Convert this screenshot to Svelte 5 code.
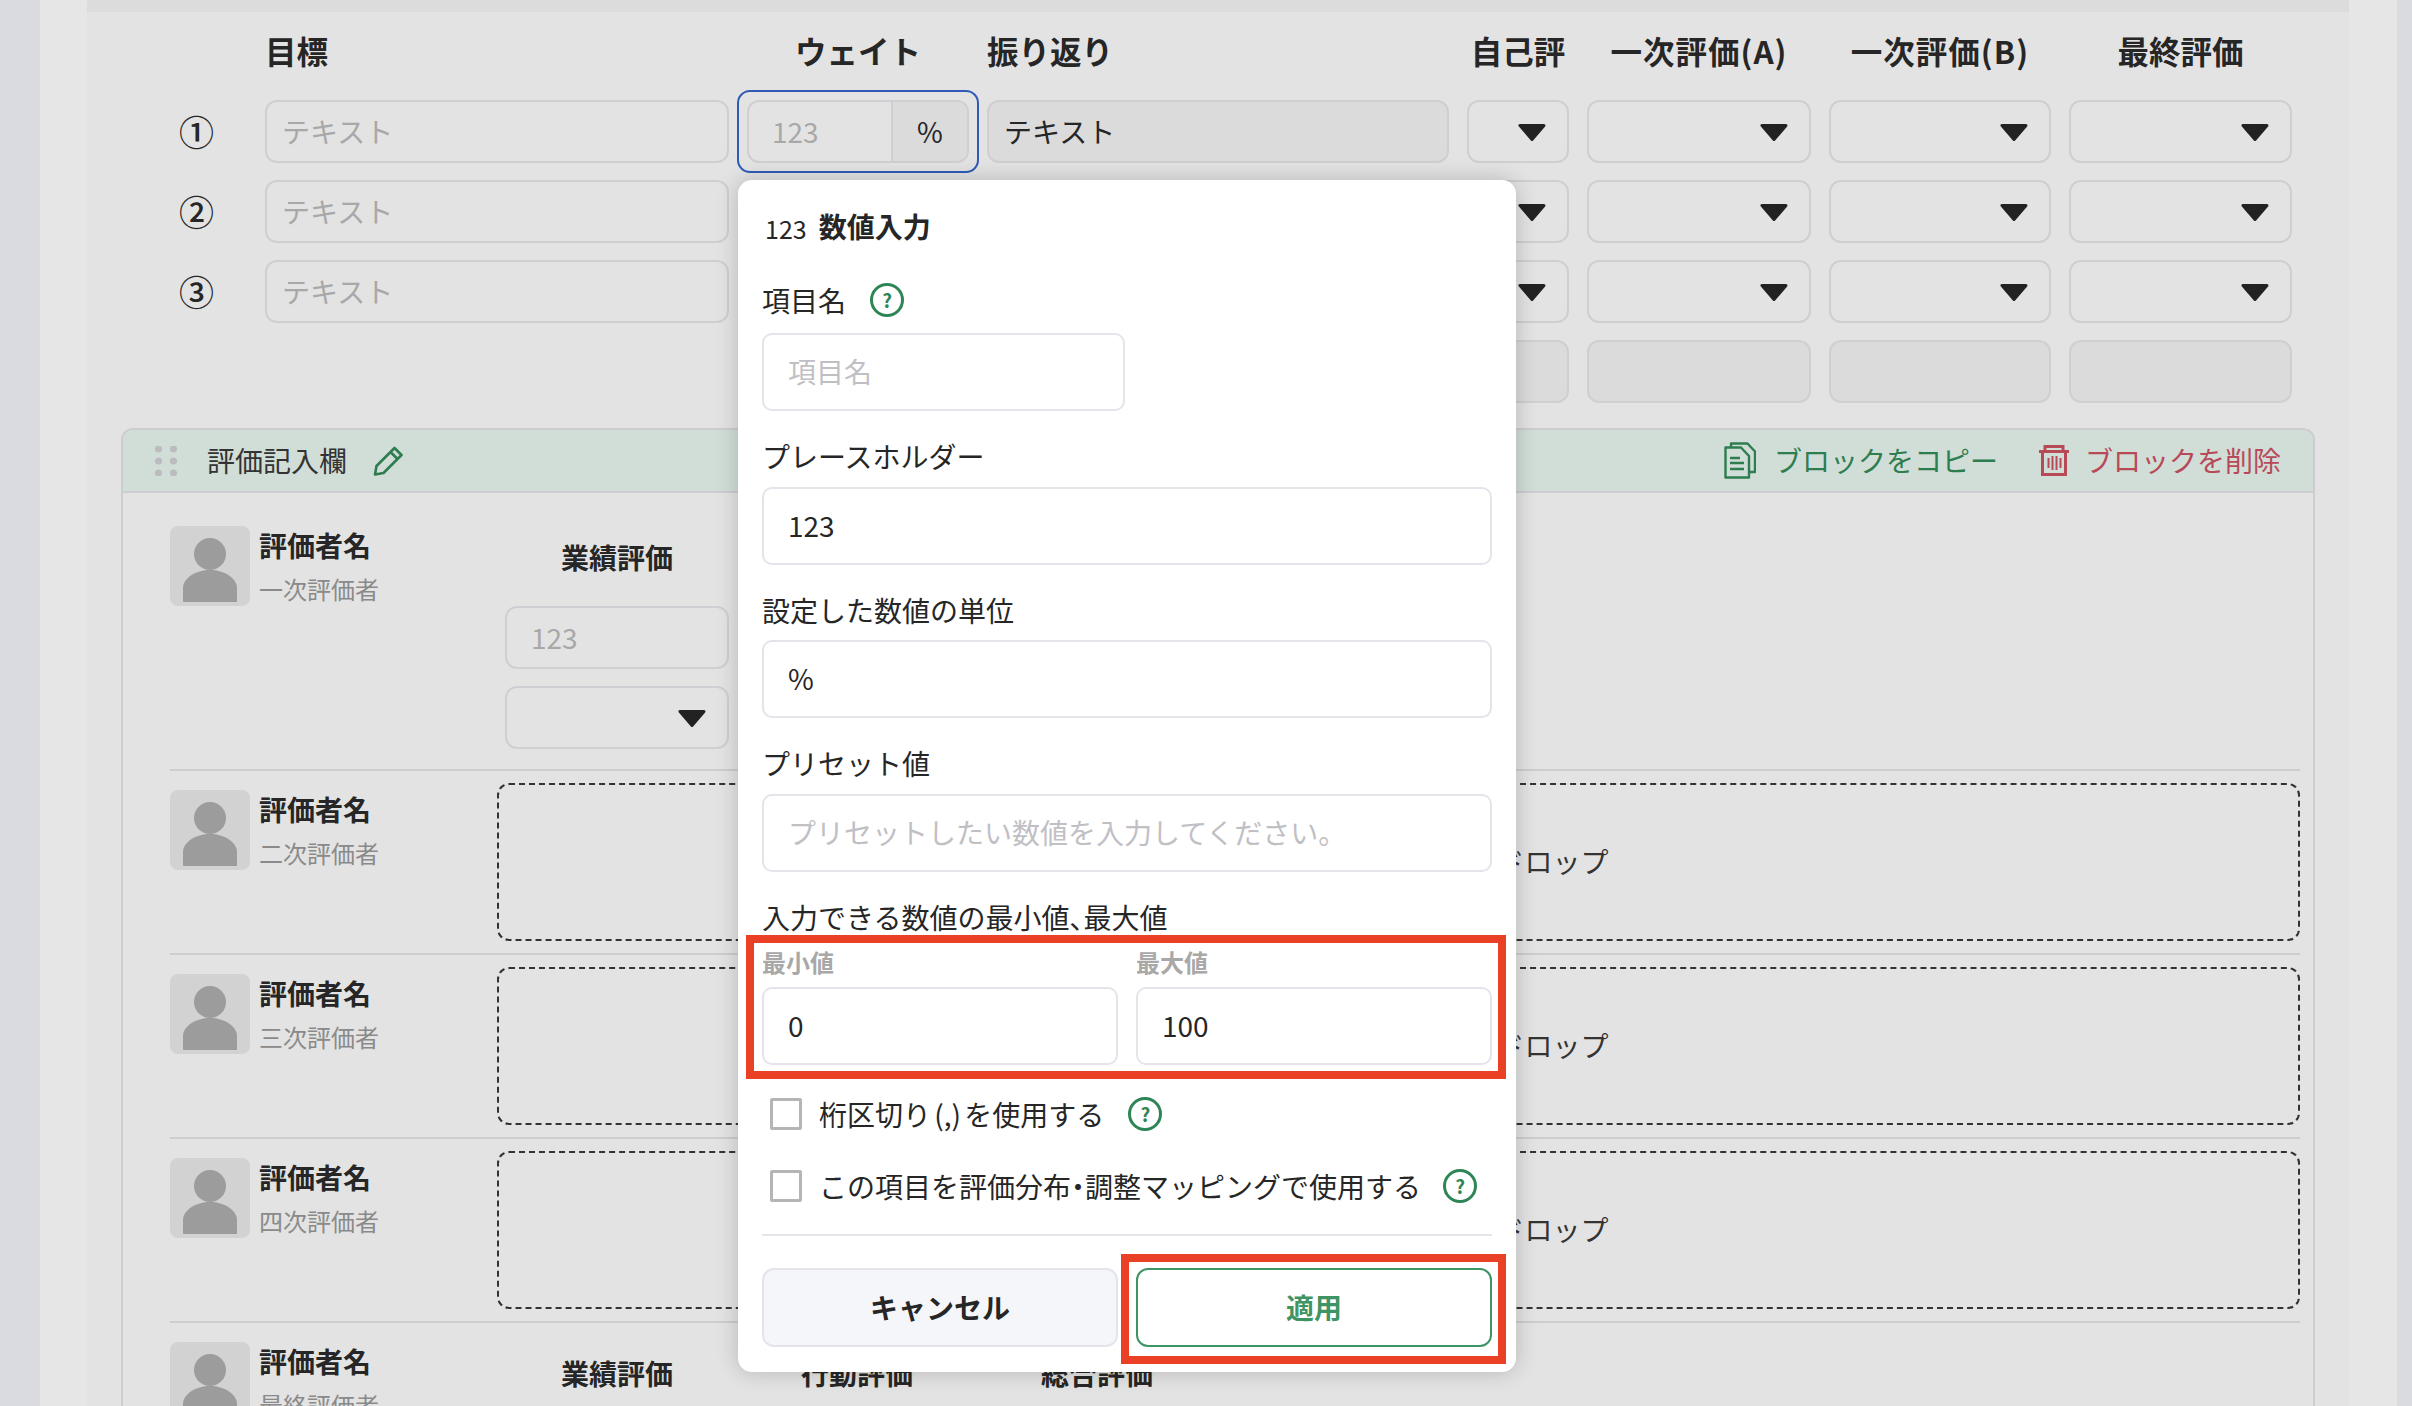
<script>
  const goals = [
    { n: '①', ph: 'テキスト', first: true },
    { n: '②', ph: 'テキスト' },
    { n: '③', ph: 'テキスト' }
  ];
  const heads = ['一次評価(A)', '一次評価(B)', '最終評価'];
  const reviewers = ['二次評価者', '三次評価者', '四次評価者'];
  const fields = [
    { label: 'プレースホルダー', value: '123' },
    { label: '設定した数値の単位', value: '%' },
    { label: 'プリセット値', ph: 'プリセットしたい数値を入力してください。' }
  ];
</script>

{#snippet arrow()}
  <svg class="arrow" viewBox="0 0 28 17" aria-hidden="true"><path d="M2 1.5H26L14 15.5Z" fill="#222" stroke="#222" stroke-width="3" stroke-linejoin="round" /></svg>
{/snippet}

{#snippet avatar()}
  <svg class="avatar" viewBox="0 0 80 80" aria-hidden="true">
    <rect width="80" height="80" rx="8" fill="#d2d2d2" />
    <circle cx="40" cy="28" r="16" fill="#9c9c9c" />
    <path d="M13 76V62C13 52 26 44 40 44C54 44 67 52 67 62V76Z" fill="#9c9c9c" />
  </svg>
{/snippet}

{#snippet person(role)}
  <div class="person">
    {@render avatar()}
    <div>
      <div class="name">評価者名</div>
      <div class="role">{role}</div>
    </div>
  </div>
{/snippet}

{#snippet help()}
  <span class="help">?</span>
{/snippet}

<div class="page">
  <div class="panel">
    <div class="inner">
      <div class="goals">
        <div></div>
        <div class="th left">目標</div>
        <div class="th">ウェイト</div>
        <div class="th left">振り返り</div>
        <div class="th">自己評</div>
        {#each heads as h}<div class="th" class:wide={h.includes('(')}>{h}</div>{/each}

        {#each goals as g}
          <div class="num">{g.n}</div>
          <div class="box ph pad">{g.ph}</div>
          <div class="weight" class:focus={g.first}>
            {#if g.first}
              <div class="box unit">
                <span class="unit-v">123</span>
                <span class="unit-a">%</span>
              </div>
            {/if}
          </div>
          <div class="box pad" class:fill={g.first}>{g.first ? 'テキスト' : ''}</div>
          {#each [0, 1, 2, 3] as _}
            <div class="box sel">{@render arrow()}</div>
          {/each}
        {/each}

        <div class="span4"></div>
        {#each [0, 1, 2, 3] as _}
          <div class="box fill"></div>
        {/each}
      </div>

      <section class="block">
        <header class="bhead">
          <div class="bleft">
            <svg class="dots" viewBox="0 0 22 30" aria-hidden="true">
              {#each [3, 15, 27] as y}
                <circle cx="3.5" cy={y} r="3.6" fill="#bcbcc0" />
                <circle cx="18.5" cy={y} r="3.6" fill="#bcbcc0" />
              {/each}
            </svg>
            <span class="btitle">評価記入欄</span>
            <svg class="pencil" viewBox="0 0 30 30" aria-hidden="true">
              <path d="M2 28.5L3.5 20L21.5 2L28.5 9L10.5 27Z M17.5 6L24.5 13" fill="none" stroke="#2e7d4f" stroke-width="2.6" stroke-linejoin="round" />
            </svg>
          </div>
          <div class="bright">
            <span class="act green">
              <svg class="copy" viewBox="0 0 32 37" aria-hidden="true">
                <g fill="none" stroke="#2e7d4f" stroke-width="2.4" stroke-linejoin="round">
                  <path d="M1.5 5.5H17L25 14V35.5H1.5Z" />
                  <path d="M7 5.5V1.5H23.5L31 9.5V30H25" />
                  <path d="M6 16H16M6 21H20M6 27H20" />
                </g>
              </svg>
              <span class="acttext">ブロックをコピー</span>
            </span>
            <span class="act red">
              <svg class="trash" viewBox="0 0 30 31" aria-hidden="true">
                <g fill="none" stroke="#b84a58" stroke-width="3">
                  <path d="M6 6V1.5H24V6" />
                  <path d="M0 6.5H30" />
                  <path d="M3.5 7V29.5H26.5V7" />
                  <path d="M9.5 13V23M13.5 11V25M17.5 11V25M21.5 13V23" stroke-width="2" />
                </g>
              </svg>
              <span class="acttext">ブロックを削除</span>
            </span>
          </div>
        </header>

        <div class="row first">
          {@render person('一次評価者')}
          <div class="evals">
            <div class="eval">
              <div class="ehead">業績評価</div>
              <div class="box ph evalv">123</div>
              <div class="box sel">{@render arrow()}</div>
            </div>
          </div>
        </div>

        {#each reviewers as r}
          <div class="row drop">
            {@render person(r)}
            <div class="dash">ここに項目をドラッグ＆ドロップ</div>
          </div>
        {/each}

        <div class="row last">
          {@render person('最終評価者')}
          <div class="evals">
            <div class="eval"><div class="ehead">業績評価</div></div>
            <div class="eval"><div class="ehead">行動評価</div></div>
            <div class="eval"><div class="ehead">総合評価</div></div>
          </div>
        </div>
      </section>
    </div>
  </div>

  <div class="pop">
    <div class="ptitle"><span class="n123">123</span><b>数値入力</b></div>
    <div class="lab namelab">項目名 {@render help()}</div>
    <div class="inp short ph">項目名</div>
    {#each fields as f}
      <div class="lab gap">{f.label}</div>
      <div class="inp" class:ph={f.ph}>{f.value ?? f.ph}</div>
    {/each}
    <div class="lab gap flush"><span>入力できる数値の最小値<span class="tight">、</span>最大値</span></div>
    <div class="two">
      <div><div class="mini">最小値</div><div class="inp">0</div></div>
      <div><div class="mini">最大値</div><div class="inp">100</div></div>
    </div>
    <div class="check c1"><span class="cb"></span><span class="ctext">桁区切り (,) を使用する</span>{@render help()}</div>
    <div class="check c2"><span class="cb"></span><span>この項目を評価分布<span class="tight">・</span>調整マッピングで使用する</span>{@render help()}</div>
    <div class="rule"></div>
    <div class="two btns">
      <div class="btn cancel">キャンセル</div>
      <div class="btn apply">適用</div>
    </div>
    <div class="mark m1"></div>
    <div class="mark m2"></div>
  </div>
</div>

<style>
  :global(body) {
    margin: 0;
    background: #d9dbe0;
  }
  .page {
    position: relative;
    width: 2412px;
    height: 1406px;
    overflow: hidden;
    padding: 0 15px 0 40px;
    box-sizing: border-box;
    font-family: "Noto Sans CJK JP", "Noto Sans", sans-serif;
    font-size: 28px;
    color: #262626;
    line-height: 1.4;
  }
  .tight {
    font-feature-settings: "palt";
  }
  .panel {
    background: #e6e6e6;
    padding: 0 48px 0 47px;
    height: 100%;
  }
  .inner {
    background: #e3e3e3;
    border-top: 12px solid #dcdcdc;
    padding: 11px 34px 0;
    height: 100%;
    box-sizing: border-box;
  }
  .goals {
    display: grid;
    margin-left: 49px;
    grid-template-columns: 77px 464px 222px 462px 102px 224px 222px 223px;
    grid-template-rows: 60px repeat(4, 63px);
    gap: 17px 18px;
  }
  .th {
    font-size: 31.5px;
    font-weight: 700;
    text-align: center;
    line-height: 55px;
    white-space: nowrap;
  }
  .th.left {
    text-align: left;
  }
  .th.wide {
    letter-spacing: 1px;
  }
  .num {
    font-size: 35px;
    font-weight: 500;
    line-height: 61px;
    padding-left: 9px;
  }
  .box {
    box-sizing: border-box;
    border: 2px solid #cfcfd3;
    border-radius: 12px;
    height: 63px;
    line-height: 58px;
    position: relative;
  }
  .pad {
    padding-left: 15px;
  }
  .evalv {
    padding-left: 24px;
  }
  .ph {
    color: #a8a8a8;
  }
  .fill {
    background: #dbdbdb;
  }
  .span4 {
    grid-column: span 4;
  }
  .sel {
    display: flex;
    align-items: center;
    justify-content: flex-end;
    padding-right: 21px;
  }
  .arrow {
    width: 28px;
    height: 17px;
    display: block;
    margin-top: 2px;
  }
  .weight {
    position: relative;
  }
  .weight.focus::after {
    content: "";
    position: absolute;
    inset: -10px;
    border: 2px solid #2f5bb7;
    border-radius: 13px;
  }
  .unit {
    display: flex;
    overflow: hidden;
  }
  .unit-v {
    width: 142px;
    padding-left: 23px;
    box-sizing: border-box;
    color: #a8a8a8;
  }
  .unit-a {
    flex: 1;
    background: #dbdbdb;
    border-left: 2px solid #cfcfd3;
    text-align: center;
  }
  .block {
    margin-top: 25px;
    border: 2px solid #cdcdd1;
    border-radius: 12px 12px 0 0;
    height: 1200px;
  }
  .bhead {
    height: 61px;
    background: #d1ddd7;
    border-bottom: 2px solid #cdcdd1;
    border-radius: 10px 10px 0 0;
    display: flex;
    justify-content: space-between;
    align-items: center;
    padding: 0 32px;
  }
  .bleft,
  .bright {
    display: flex;
    align-items: center;
  }
  .dots {
    width: 22px;
    height: 30px;
    margin-right: 30px;
  }
  .btitle {
    color: #333;
    width: 166px;
    line-height: 36px;
    padding-bottom: 2px;
  }
  .pencil {
    width: 30px;
    height: 30px;
  }
  .bright {
    gap: 41px;
  }
  .act {
    display: flex;
    align-items: center;
    gap: 18px;
    line-height: 36px;
  }
  .acttext {
    padding-bottom: 2px;
  }
  .green {
    color: #2e7d4f;
  }
  .red {
    color: #b84a58;
    gap: 16px;
  }
  .copy {
    width: 32px;
    height: 37px;
  }
  .trash {
    width: 30px;
    height: 31px;
  }
  .row {
    margin: 0 13px 0 47px;
    display: flex;
    border-bottom: 2px solid #cdcdd1;
  }
  .person {
    width: 327px;
    flex: none;
    display: flex;
    gap: 9px;
  }
  .avatar {
    width: 80px;
    height: 80px;
    flex: none;
  }
  .name {
    font-weight: 700;
    line-height: 38px;
  }
  .role {
    font-size: 24px;
    line-height: 50px;
    color: #8a8a8a;
  }
  .first {
    padding: 33px 0 20px;
  }
  .last {
    padding-top: 19px;
    border-bottom: 0;
  }
  .evals {
    display: flex;
    gap: 16px;
    padding-left: 8px;
  }
  .eval {
    width: 224px;
  }
  .ehead {
    font-weight: 700;
    text-align: center;
    height: 80px;
    line-height: 62px;
  }
  .eval .sel {
    margin-top: 17px;
  }
  .drop {
    padding: 12px 0;
  }
  .drop .person {
    padding-top: 7px;
  }
  .dash {
    flex: 1;
    height: 158px;
    box-sizing: border-box;
    border: 2px dashed #333;
    border-radius: 12px;
    display: flex;
    align-items: center;
    justify-content: center;
    color: #333;
  }
  .pop {
    position: absolute;
    left: 738px;
    top: 180px;
    width: 778px;
    height: 1192px;
    box-sizing: border-box;
    padding: 28px 24px;
    background: #fff;
    border-radius: 14px;
    box-shadow: 0 0 22px rgba(0, 0, 0, 0.2);
  }
  .ptitle {
    height: 40px;
    line-height: 36px;
    display: flex;
    align-items: flex-start;
    padding-left: 3px;
    gap: 12px;
  }
  .n123 {
    font-size: 25px;
    padding-top: 2px;
  }
  .lab {
    height: 40px;
    line-height: 37px;
    margin-bottom: 10px;
    display: flex;
    align-items: center;
    gap: 24px;
    white-space: nowrap;
  }
  .namelab {
    margin-top: 32px;
    margin-bottom: 13px;
    line-height: 36px;
  }
  .gap {
    margin-top: 25.5px;
  }
  .flush {
    margin-bottom: 0;
  }
  .inp {
    box-sizing: border-box;
    height: 78px;
    line-height: 72px;
    border: 2px solid #e4e4ea;
    border-radius: 10px;
    padding-left: 24px;
  }
  .inp.ph {
    color: #c0c0c4;
  }
  .short {
    width: 363px;
  }
  .two {
    display: grid;
    grid-template-columns: 356px 356px;
    gap: 18px;
  }
  .mini {
    font-size: 24px;
    font-weight: 700;
    color: #a8a8a8;
    height: 40px;
    line-height: 34px;
    margin: 8px 0 2px;
  }
  .check {
    display: flex;
    align-items: center;
    padding-left: 8px;
    height: 40px;
    white-space: nowrap;
    line-height: 37px;
  }
  .ctext {
    word-spacing: -3px;
  }
  .c1 {
    margin-top: 29px;
  }
  .c2 {
    margin-top: 32px;
  }
  .cb {
    width: 32px;
    height: 32px;
    box-sizing: border-box;
    border: 3px solid #b5b5b8;
    border-radius: 2px;
    margin-right: 17px;
    flex: none;
  }
  .help {
    width: 34px;
    height: 34px;
    box-sizing: border-box;
    border: 3px solid #2e8555;
    border-radius: 50%;
    color: #2e8555;
    font-size: 19px;
    font-weight: 700;
    line-height: 28px;
    text-align: center;
    flex: none;
    display: inline-block;
  }
  .c1 .help {
    margin-left: 24px;
  }
  .c2 .help {
    margin-left: 22px;
  }
  .rule {
    height: 2px;
    background: #e4e4ea;
    margin-top: 28px;
  }
  .btns {
    margin-top: 32px;
  }
  .btn {
    box-sizing: border-box;
    height: 79px;
    border-radius: 12px;
    display: flex;
    align-items: center;
    justify-content: center;
    font-weight: 700;
  }
  .cancel {
    background: #f5f6fa;
    border: 2px solid #e4e4ea;
  }
  .apply {
    border: 2px solid #3f9463;
    color: #3f9463;
  }
  .mark {
    position: absolute;
    box-sizing: border-box;
    border: 8px solid #ea4025;
  }
  .m1 {
    left: 8px;
    top: 755px;
    width: 760px;
    height: 144px;
  }
  .m2 {
    left: 383px;
    top: 1074px;
    width: 385px;
    height: 110px;
  }
</style>
